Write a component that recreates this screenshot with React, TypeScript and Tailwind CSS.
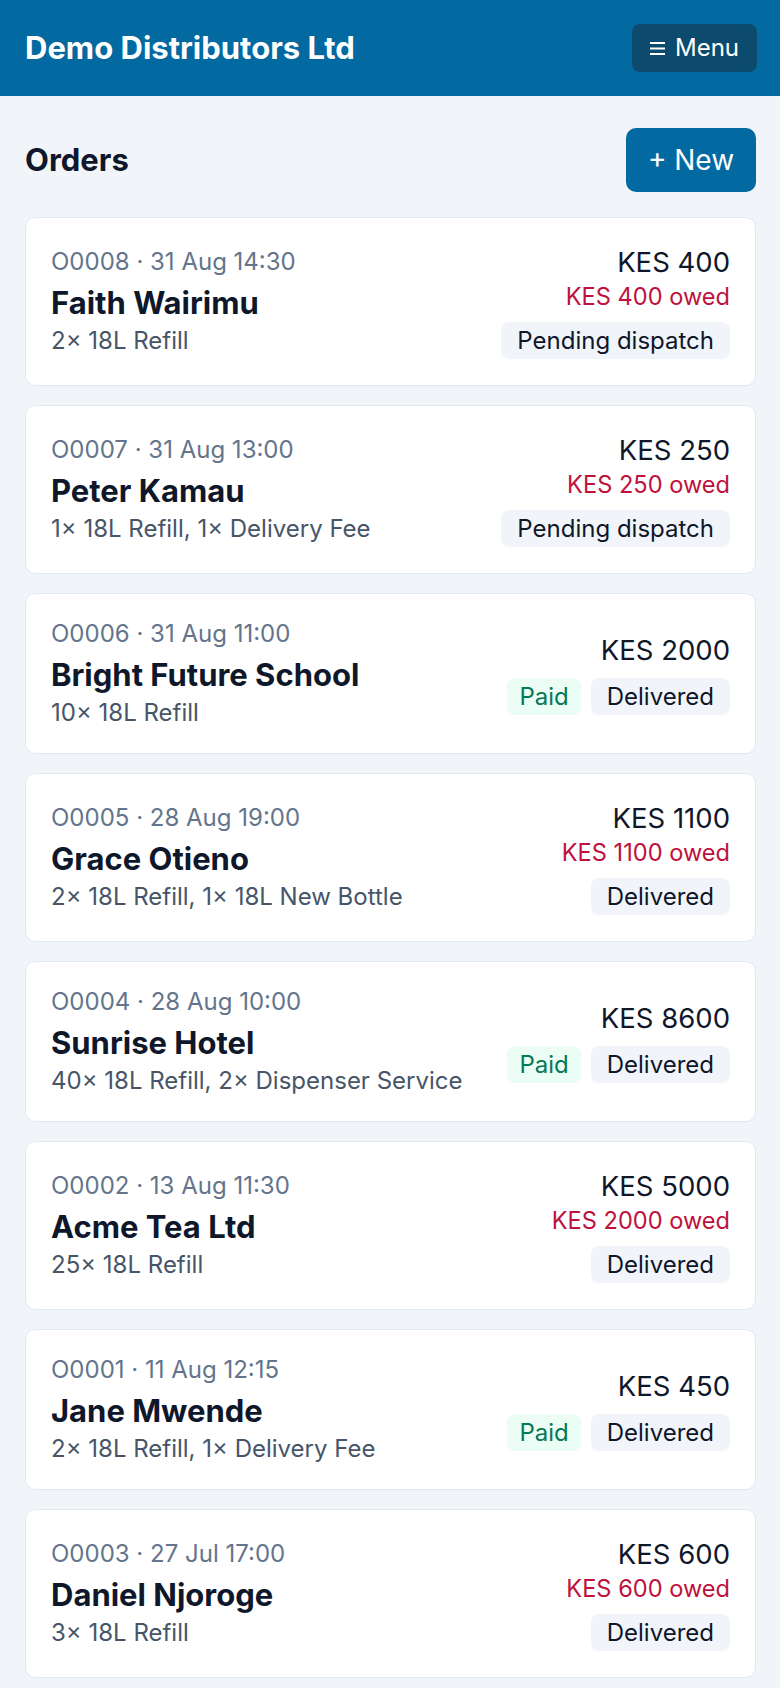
import React from 'react';

type Order = {
  id: string;
  when: string;
  customer: string;
  items: string;
  total: number;
  owed?: number;
  paid?: boolean;
  status: string;
};

const orders: Order[] = [
  { id: 'O0008', when: '31 Aug 14:30', customer: 'Faith Wairimu', items: '2× 18L Refill', total: 400, owed: 400, status: 'Pending dispatch' },
  { id: 'O0007', when: '31 Aug 13:00', customer: 'Peter Kamau', items: '1× 18L Refill, 1× Delivery Fee', total: 250, owed: 250, status: 'Pending dispatch' },
  { id: 'O0006', when: '31 Aug 11:00', customer: 'Bright Future School', items: '10× 18L Refill', total: 2000, paid: true, status: 'Delivered' },
  { id: 'O0005', when: '28 Aug 19:00', customer: 'Grace Otieno', items: '2× 18L Refill, 1× 18L New Bottle', total: 1100, owed: 1100, status: 'Delivered' },
  { id: 'O0004', when: '28 Aug 10:00', customer: 'Sunrise Hotel', items: '40× 18L Refill, 2× Dispenser Service', total: 8600, paid: true, status: 'Delivered' },
  { id: 'O0002', when: '13 Aug 11:30', customer: 'Acme Tea Ltd', items: '25× 18L Refill', total: 5000, owed: 2000, status: 'Delivered' },
  { id: 'O0001', when: '11 Aug 12:15', customer: 'Jane Mwende', items: '2× 18L Refill, 1× Delivery Fee', total: 450, paid: true, status: 'Delivered' },
  { id: 'O0003', when: '27 Jul 17:00', customer: 'Daniel Njoroge', items: '3× 18L Refill', total: 600, owed: 600, status: 'Delivered' },
];

const OrderCard = ({ order }: { order: Order }) => (
  <div className="flex items-center justify-between rounded-[10px] border border-[#e2e8f0] bg-white px-[25px] py-[26px]">
    <div className="flex flex-col">
      <div className="text-[24px] leading-[28px] text-[#64748b]">
        {order.id} · {order.when}
      </div>
      <div className="mt-[8px] text-[31px] font-bold leading-[38px] text-[#0f172a]">{order.customer}</div>
      <div className="mt-[5px] text-[24px] leading-[28px] text-[#475569]">{order.items}</div>
    </div>

    <div className="flex flex-col items-end">
      <div className="text-[27.5px] leading-[36px] text-[#0f172a]">KES {order.total}</div>
      {order.owed !== undefined && (
        <div className="mt-[3px] text-[23.6px] leading-[28px] text-[#be123c]">KES {order.owed} owed</div>
      )}
      <div className={`flex gap-[10px] ${order.owed !== undefined ? 'mt-[11px]' : 'mt-[10px]'}`}>
        {order.paid && (
          <span className="flex h-[37px] items-center rounded-[8px] bg-[#ecfdf5] px-[12px] text-[24px] text-[#047857]">
            Paid
          </span>
        )}
        <span className="flex h-[37px] items-center rounded-[8px] bg-[#f1f5f9] px-[16px] text-[24px] text-[#0f172a]">
          {order.status}
        </span>
      </div>
    </div>
  </div>
);

export default function App() {
  return (
    <div className="min-h-screen bg-[#f1f5f9] font-['Inter',sans-serif]">
      <header className="flex h-[96px] items-center justify-between bg-[#0369a1] pl-[25px] pr-[23px]">
        <h1 className="text-[31px] font-bold text-white">Demo Distributors Ltd</h1>
        <button className="flex h-[48px] items-center gap-[10px] rounded-[8px] bg-[#0c4a6e] px-[18px] text-[24px] text-white">
          <svg width="15" height="14" viewBox="0 0 15 14" fill="none">
            <path d="M0 2h15M0 7.5h15M0 13h15" stroke="white" strokeWidth="2" />
          </svg>
          Menu
        </button>
      </header>

      <main className="pl-[25px] pr-[24px] pt-[32px] pb-[24px]">
        <div className="mb-[25px] flex items-center justify-between">
          <h2 className="text-[31px] font-bold text-[#0f172a]">Orders</h2>
          <button className="h-[64px] w-[130px] rounded-[10px] bg-[#0369a1] text-[28px] text-white">+ New</button>
        </div>

        <div className="flex flex-col gap-[19px]">
          {orders.map((o) => (
            <OrderCard key={o.id} order={o} />
          ))}
        </div>
      </main>
    </div>
  );
}
